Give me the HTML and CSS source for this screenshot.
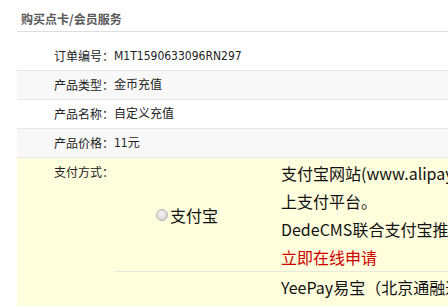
FILE: index.html
```html
<!DOCTYPE html>
<html lang="zh-CN">
<head>
<meta charset="utf-8">
<title>购买点卡/会员服务</title>
<link rel="stylesheet" href="styles.css">
</head>
<body>
<div class="page">
  <div class="title">购买点卡/会员服务</div>
  <div class="list">
    <div class="row">
      <div class="label">订单编号：</div>
      <div class="value">M1T1590633096RN297</div>
    </div>
    <div class="row alt">
      <div class="label">产品类型：</div>
      <div class="value">金币充值</div>
    </div>
    <div class="row">
      <div class="label">产品名称：</div>
      <div class="value">自定义充值</div>
    </div>
    <div class="row alt">
      <div class="label">产品价格：</div>
      <div class="value">11元</div>
    </div>
    <div class="row pay">
      <div class="label">支付方式：</div>
      <div class="methods">
        <div class="method">
          <div class="pick"><span class="radio"></span><span class="pname">支付宝</span></div>
          <div class="desc">支付宝网站(www.alipay.com) 是国内先进的网<br>上支付平台。<br>DedeCMS联合支付宝推出支付宝专业商家服务。<br><a class="apply" href="#">立即在线申请</a></div>
        </div>
        <div class="method last">
          <div class="pick"><span class="radio"></span><span class="pname">易宝</span></div>
          <div class="desc">YeePay易宝（北京通融通信息技术有限公司）是专业从事多<br>元化电子支付一站式服务的领先者，<br>为商户提供安全、便捷的在线支付服务。<br><a class="apply" href="#">立即在线申请</a></div>
        </div>
      </div>
    </div>
  </div>
</div>
</body>
</html>
```
FILE: styles.css
```css
html, body {
  margin: 0;
  padding: 0;
  background: #fff;
  overflow: hidden;
}
body {
  width: 448px;
  height: 306px;
  font-family: "DejaVu Sans", "Noto Sans CJK SC", sans-serif;
  font-size: 12px;
  color: #222;
}
.page {
  width: 900px;
  padding-left: 17px;
}
.title {
  height: 19px;
  padding-top: 12px;
  padding-left: 4px;
  line-height: 14px;
  font-family: "Noto Sans CJK SC", sans-serif;
  font-weight: bold;
  font-size: 12px;
  color: #5a5a5a;
  border-bottom: 1px solid #dedede;
}
.list {
  margin-top: 10px;
}
.row {
  display: flex;
  border-bottom: 1px solid #e6e6e6;
  line-height: 28px;
}
.row.alt {
  background: #f8f8f8;
}
.label {
  width: 97px;
  flex: none;
  text-align: right;
  font-family: "Noto Sans CJK SC", sans-serif;
  font-size: 12px;
  color: #222;
}
.value {
  font-family: "DejaVu Sans Condensed", "Noto Sans CJK SC", sans-serif;
  font-size: 12px;
  color: #222;
}
.row.pay {
  background: #fffedd;
  border-bottom: none;
  align-items: flex-start;
}
.methods {
  display: flex;
  flex-direction: column;
}
.method {
  display: flex;
  border-bottom: 1px solid #e8e8de;
}
.method.last {
  border-bottom: none;
}
.pick {
  width: 146px;
  flex: none;
  display: flex;
  align-items: center;
  justify-content: center;
  font-family: "Noto Sans CJK SC", sans-serif;
  font-size: 16px;
  color: #111;
}
.radio {
  width: 10px;
  height: 10px;
  border-radius: 50%;
  border: 1px solid #b4b4b4;
  background: radial-gradient(circle at 40% 35%, #f4f4f4 0%, #dcdcdc 60%, #c8c8c8 100%);
  margin-right: 2px;
}
.desc {
  padding-left: 21px;
  padding-top: 1px;
  font-family: "Noto Sans CJK SC", sans-serif;
  font-size: 16px;
  line-height: 28px;
  white-space: nowrap;
  color: #111;
}
.apply {
  color: #cc0000;
  text-decoration: none;
}
```
